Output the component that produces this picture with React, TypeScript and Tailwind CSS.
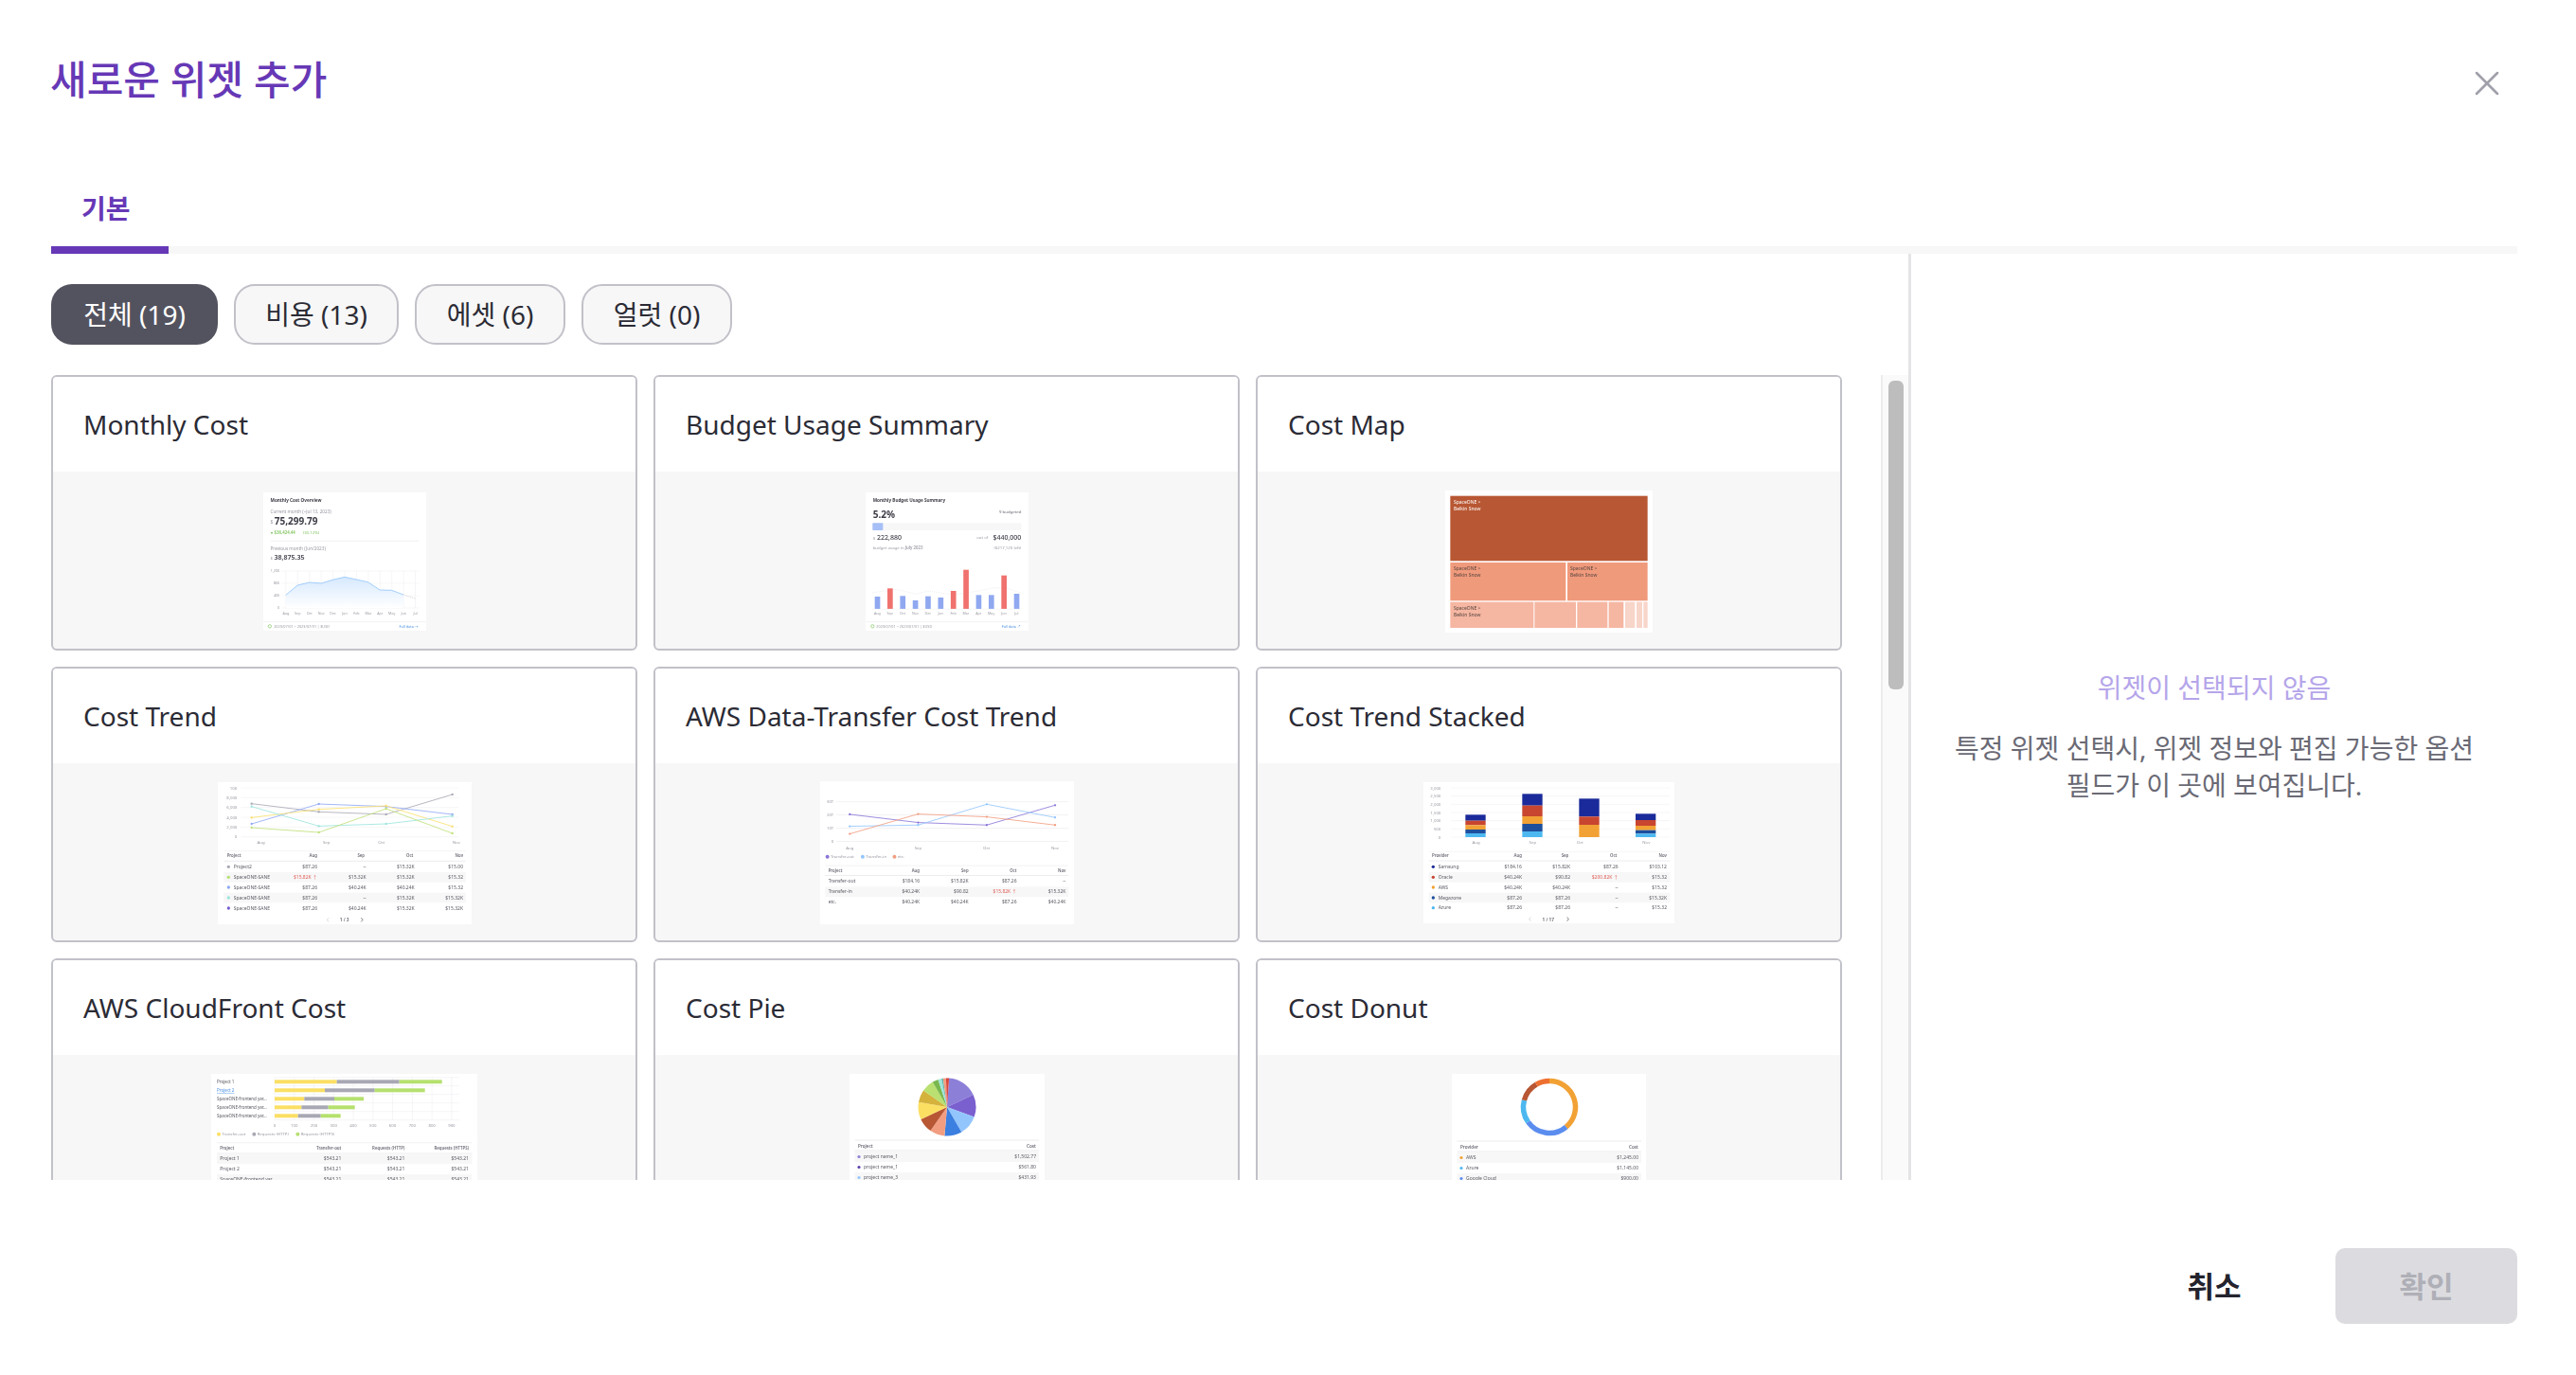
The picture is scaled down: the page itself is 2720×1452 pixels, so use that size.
import { X } from "lucide-react";

const INK = "#3c3c46";
const MUTED = "#9a9aa4";
const LINE = "#ececf0";
const months12 = ["Aug", "Sep", "Oct", "Nov", "Dec", "Jan", "Feb", "Mar", "Apr", "May", "Jun", "Jul"];

function MonthlyCostThumb() {
  const pts = [[126, 353], [163, 322], [201, 313], [238, 316], [274, 305], [312, 296], [350, 304], [386, 312], [424, 337], [461, 338], [498, 352]];
  const line = pts.map((p) => p.join(",")).join(" ");
  return (
    <svg viewBox="55 28 515 438" width={172} height={146} className="shrink-0 bg-white blur-[0.4px]">
      <defs>
        <linearGradient id="costFill" x1="0" y1="0" x2="0" y2="1">
          <stop offset="0" stopColor="#d6e9fd" />
          <stop offset="1" stopColor="#ffffff" />
        </linearGradient>
      </defs>
      <text x={77} y={57} fontSize={14} fontWeight={700} fill={INK}>Monthly Cost Overview</text>
      <text x={77} y={93} fontSize={14} fill={MUTED}>Current month (~Jul 13, 2023)</text>
      <text x={77} y={127} fontSize={15} fill={MUTED}>$</text>
      <text x={90} y={131} fontSize={30} fontWeight={700} fill={INK}>75,299.79</text>
      <text x={80} y={161} fontSize={13} fontWeight={600} fill="#7cc25a">▾ $36,424.44</text>
      <text x={180} y={161} fontSize={13} fill="#7cc25a">(33.12%)</text>
      <line x1={77} y1={182} x2={548} y2={182} stroke={LINE} strokeWidth={2} />
      <text x={77} y={211} fontSize={14} fill={MUTED}>Previous month (Jun/2023)</text>
      <text x={77} y={240} fontSize={13} fill={MUTED}>$</text>
      <text x={89} y={242} fontSize={21} fontWeight={600} fill={INK}>38,875.35</text>
      {[277, 316, 355, 394].map((y, i) => (
        <g key={y}>
          <line x1={112} y1={y} x2={548} y2={y} stroke={LINE} strokeWidth={1.5} />
          <text x={106} y={y + 4} fontSize={11} textAnchor="end" fill={MUTED}>{["1,200", "800", "400", "0"][i]}</text>
        </g>
      ))}
      {months12.map((m, i) => (
        <g key={m}>
          <line x1={126 + i * 37.3} y1={277} x2={126 + i * 37.3} y2={394} stroke={LINE} strokeWidth={1.5} />
          <text x={126 + i * 37.3} y={414} fontSize={11} textAnchor="middle" fill={MUTED}>{m}</text>
        </g>
      ))}
      <polygon points={`126,394 ${line} 498,394`} fill="url(#costFill)" />
      <polyline points={line} fill="none" stroke="#93c5fd" strokeWidth={2.5} />
      <polyline points="498,352 536,364" fill="none" stroke="#c4c4cc" strokeWidth={2} strokeDasharray="4 3" />
      <line x1={55} y1={438} x2={570} y2={438} stroke={LINE} strokeWidth={2} />
      <circle cx={75} cy={452} r={5} fill="none" stroke="#7cc25a" strokeWidth={2} />
      <text x={88} y={456} fontSize={11.5} fill={MUTED}>2023/07/01 ~ 2023/07/31 | $USD</text>
      <text x={485} y={456} fontSize={11.5} fill="#4a90e2">Full data →</text>
    </svg>
  );
}

function BudgetThumb() {
  const tops = [358, 332, 356, 370, 357, 361, 340, 273, 353, 353, 291, 349];
  const red = [1, 6, 7, 10];
  return (
    <svg viewBox="43 28 514 438" width={172} height={146} className="shrink-0 bg-white blur-[0.4px]">
      <text x={65} y={57} fontSize={14} fontWeight={700} fill={INK}>Monthly Budget Usage Summary</text>
      <text x={65} y={110} fontSize={30} fontWeight={700} fill={INK}>5.2%</text>
      <text x={535} y={94} fontSize={13} textAnchor="end" fill="#6a6a75">9 budgeted</text>
      <rect x={64} y={125} width={471} height={23} fill="#f7f7f7" />
      <rect x={64} y={125} width={33} height={23} rx={2} fill="#a6bff6" />
      <text x={65} y={178} fontSize={13} fill={MUTED}>$</text>
      <text x={78} y={179} fontSize={21} fontWeight={500} fill={INK}>222,880</text>
      <text x={430} y={176} fontSize={13} textAnchor="end" fill={MUTED}>out of</text>
      <text x={535} y={179} fontSize={21} fontWeight={500} textAnchor="end" fill={INK}>$440,000</text>
      <text x={65} y={207} fontSize={13} fill={MUTED}>budget usage in <tspan fontWeight={600}>July 2023</tspan></text>
      <text x={535} y={207} fontSize={13} textAnchor="end" fill={MUTED}>($217,120 left)</text>
      <polyline points="64,345 140,335 200,350 240,340 320,352 400,340 450,330 490,332 535,347" fill="none" stroke="#dcdce0" strokeWidth={1.5} strokeDasharray="3 3" />
      {tops.map((t, i) => (
        <rect key={i} x={71 + i * 40.1} y={t} width={17} height={397 - t} fill={red.includes(i) ? "#f0726e" : "#8fa8f0"} />
      ))}
      <line x1={64} y1={398} x2={535} y2={398} stroke={LINE} strokeWidth={1.5} />
      {months12.map((m, i) => (
        <text key={m} x={79 + i * 40.1} y={414} fontSize={11} textAnchor="middle" fill={MUTED}>{m}</text>
      ))}
      <line x1={43} y1={438} x2={557} y2={438} stroke={LINE} strokeWidth={2} />
      <circle cx={64} cy={452} r={5} fill="none" stroke="#7cc25a" strokeWidth={2} />
      <text x={76} y={456} fontSize={11.5} fill={MUTED}>2023/07/01 ~ 2023/07/31 | $USD</text>
      <text x={473} y={456} fontSize={11.5} fill="#4a90e2">Full data ↗</text>
    </svg>
  );
}

function CostMapThumb() {
  const mid = "#f09a7c";
  const light = "#f5b6a2";
  const pale = "#f8d5c9";
  const tiles = [
    [66, 248, 366, 121, mid], [437, 248, 254, 121, mid],
    [66, 373, 264, 82, light], [333, 373, 131, 82, light], [468, 373, 96, 82, light], [568, 373, 47, 82, light],
    [620, 373, 31, 82, pale], [656, 373, 18, 82, pale], [678, 373, 13, 82, pale],
  ] as const;
  const labels = [[77, 62, "#ffffff"], [77, 273, "#55443f"], [446, 273, "#55443f"], [77, 398, "#55443f"]] as const;
  return (
    <svg viewBox="50 20 657 450" width={219} height={150} className="shrink-0 bg-white blur-[0.3px]">
      <rect x={66} y={37} width={625} height={206} fill="#b85733" />
      {tiles.map(([x, y, w, h, c]) => (
        <rect key={`${x}-${y}`} x={x} y={y} width={w} height={h} fill={c} />
      ))}
      {labels.map(([x, y, c]) => (
        <text key={`${x}-${y}`} x={x} y={y} fontSize={15} fill={c}>
          <tspan x={x}>SpaceONE &gt;</tspan>
          <tspan x={x} dy={21}>Belkin Snow</tspan>
        </text>
      ))}
    </svg>
  );
}

type Row = { name: string; dot?: string; cells: string[]; alert?: number };

function TableRows({ rows, ys, nameX, cols, left, right, size = 15 }: { rows: Row[]; ys: number[]; nameX: number; cols: number[]; left: number; right: number; size?: number }) {
  return (
    <>
      {rows.map((r, i) => (
        <g key={i}>
          {i % 2 === 1 && <rect x={left} y={ys[i] - 16} width={right - left} height={32} fill="#f7f7f7" />}
          {r.dot && <circle cx={nameX - 16} cy={ys[i]} r={5} fill={r.dot} />}
          <text x={nameX} y={ys[i] + 5} fontSize={size} fill="#5a5a64">{r.name}</text>
          {r.cells.map((c, j) => (
            <text key={j} x={cols[j]} y={ys[i] + 5} fontSize={size} textAnchor="end" fill={r.alert === j ? "#e0605a" : "#5a5a64"}>{c}</text>
          ))}
        </g>
      ))}
    </>
  );
}

function CostTrendThumb() {
  const series = [
    ["#a8a8b4", "134,96 347,122 560,130 770,67"],
    ["#8fa8f5", "134,160 347,97 560,105 770,130"],
    ["#fbe06e", "134,140 347,114 560,103 770,168"],
    ["#9ce5dc", "134,105 347,167 560,160 770,135"],
    ["#bfe07a", "134,172 347,187 560,112 770,190"],
  ];
  const rows: Row[] = [
    { name: "Project2", dot: "#a8a8b4", cells: ["$87.26", "--", "$15.32K", "$15.00"] },
    { name: "SpaceONE-SANE", dot: "#b5e06e", cells: ["$15.82K ↑", "$15.32K", "$15.32K", "$15.32"], alert: 0 },
    { name: "SpaceONE-SANE", dot: "#8fa8f5", cells: ["$87.26", "$40.24K", "$40.24K", "$15.32"] },
    { name: "SpaceONE-SANE", dot: "#9ce5dc", cells: ["$87.26", "--", "$15.32K", "$15.32K"] },
    { name: "SpaceONE-SANE", dot: "#7a5fcf", cells: ["$87.26", "$40.24K", "$15.32K", "$15.32K"] },
  ];
  return (
    <svg viewBox="28 28 802 450" width={268} height={150} className="shrink-0 bg-white blur-[0.4px]">
      {[46, 77, 108, 139, 170, 201].map((y, i) => (
        <g key={y}>
          <line x1={100} y1={y} x2={790} y2={y} stroke={LINE} strokeWidth={1.5} />
          <text x={88} y={y + 5} fontSize={13} textAnchor="end" fill={MUTED}>{["10K", "8,000", "6,000", "4,000", "2,000", "0"][i]}</text>
        </g>
      ))}
      {series.map(([c, p]) => (
        <g key={c}>
          <polyline points={p} fill="none" stroke={c} strokeWidth={2.5} />
          {p.split(" ").map((q) => (
            <circle key={q} cx={Number(q.split(",")[0])} cy={Number(q.split(",")[1])} r={3.5} fill={c} />
          ))}
        </g>
      ))}
      {[["Aug", 164], ["Sep", 371], ["Oct", 545], ["Nov", 782]].map(([m, x]) => (
        <text key={m} x={x} y={222} fontSize={13} textAnchor="middle" fill={MUTED}>{m}</text>
      ))}
      <line x1={46} y1={246} x2={812} y2={246} stroke={LINE} strokeWidth={1.5} />
      <text x={56} y={266} fontSize={13} fontWeight={600} fill="#6a6a75">Project</text>
      {["Aug", "Sep", "Oct", "Nov"].map((m, i) => (
        <text key={m} x={[342, 492, 646, 804][i]} y={266} fontSize={13} fontWeight={600} textAnchor="end" fill="#6a6a75">{m}</text>
      ))}
      <line x1={46} y1={278} x2={812} y2={278} stroke={LINE} strokeWidth={3} />
      <TableRows rows={rows} ys={[296, 329, 361, 394, 427]} nameX={77} cols={[342, 497, 650, 804]} left={46} right={812} />
      <path d="M378 458l-5 6 5 6" fill="none" stroke="#c4c4cc" strokeWidth={2} />
      <text x={428} y={470} fontSize={14} fontWeight={600} textAnchor="middle" fill="#5a5a64">1 / 3</text>
      <path d="M481 458l5 6-5 6" fill="none" stroke="#3c3c46" strokeWidth={2} />
    </svg>
  );
}

function TransferTrendThumb() {
  const series = [
    ["#8a75d8", "111,132 328,158 546,166 763,103"],
    ["#93c5fd", "111,170 328,166 546,100 763,142"],
    ["#f29d80", "111,194 328,131 546,140 763,166"],
  ];
  const rows: Row[] = [
    { name: "Transfer-out", cells: ["$184.16", "$15.82K", "$87.26", "--"] },
    { name: "Transfer-in", cells: ["$40.24K", "$90.82", "$15.82K ↑", "$15.32K"], alert: 2 },
    { name: "etc.", cells: ["$40.24K", "$40.24K", "$87.26", "$40.24K"] },
  ];
  return (
    <svg viewBox="17 28 806 452" width={268} height={151} className="shrink-0 bg-white blur-[0.4px]">
      {[92, 134, 176, 218].map((y, i) => (
        <g key={y}>
          <line x1={68} y1={y} x2={806} y2={y} stroke={LINE} strokeWidth={2} />
          <text x={60} y={y + 5} fontSize={13} textAnchor="end" fill={MUTED}>{["30T", "20T", "10T", "0"][i]}</text>
        </g>
      ))}
      {series.map(([c, p]) => (
        <g key={c}>
          <polyline points={p} fill="none" stroke={c} strokeWidth={2.5} />
          {p.split(" ").map((q) => (
            <circle key={q} cx={Number(q.split(",")[0])} cy={Number(q.split(",")[1])} r={3.5} fill={c} />
          ))}
        </g>
      ))}
      {[["Aug", 111], ["Sep", 328], ["Oct", 545], ["Nov", 763]].map(([m, x]) => (
        <text key={m} x={x} y={244} fontSize={13} textAnchor="middle" fill={MUTED}>{m}</text>
      ))}
      {[[40, "#8a75d8", "Transfer-out"], [152, "#93c5fd", "Transfer-in"], [253, "#f29d80", "etc."]].map(([x, c, t]) => (
        <g key={t as string}>
          <circle cx={x as number} cy={267} r={6} fill={c as string} />
          <text x={(x as number) + 10} y={272} fontSize={13} fill={MUTED}>{t}</text>
        </g>
      ))}
      <line x1={33} y1={295} x2={806} y2={295} stroke={LINE} strokeWidth={2} />
      <text x={43} y={317} fontSize={13} fontWeight={600} fill="#6a6a75">Project</text>
      {["Aug", "Sep", "Oct", "Nov"].map((m, i) => (
        <text key={m} x={[333, 488, 641, 797][i]} y={317} fontSize={13} fontWeight={600} textAnchor="end" fill="#6a6a75">{m}</text>
      ))}
      <line x1={33} y1={326} x2={806} y2={326} stroke={LINE} strokeWidth={3} />
      <TableRows rows={rows} ys={[345, 378, 411]} nameX={43} cols={[333, 488, 641, 797]} left={33} right={806} />
    </svg>
  );
}

function StackedThumb() {
  const navy = "#1a2a9a";
  const red = "#c8452f";
  const orange = "#f2a134";
  const blue = "#1d4f9c";
  const sky = "#4db8f0";
  const stacks: [number, [number, number, string][]][] = [
    [168, [[131, 150, navy], [150, 164, red], [164, 178, orange], [178, 190, blue], [190, 202, sky]]],
    [348, [[65, 102, navy], [102, 136, red], [136, 160, orange], [160, 184, blue], [184, 202, sky]]],
    [528, [[80, 137, navy], [137, 163, red], [163, 202, orange]]],
    [707, [[128, 148, navy], [148, 166, red], [166, 180, orange], [180, 191, blue], [191, 202, sky]]],
  ];
  const rows: Row[] = [
    { name: "Samsung", dot: navy, cells: ["$184.16", "$15.82K", "$87.26", "$103.12"] },
    { name: "Oracle", dot: red, cells: ["$40.24K", "$90.82", "$200.82K ↑", "$15.32"], alert: 2 },
    { name: "AWS", dot: orange, cells: ["$40.24K", "$40.24K", "--", "$15.32"] },
    { name: "Megazone", dot: blue, cells: ["$87.26", "$87.26", "--", "$15.32K"] },
    { name: "Azure", dot: sky, cells: ["$87.26", "$87.26", "--", "$15.32"] },
  ];
  return (
    <svg viewBox="35 28 795 447" width={265} height={149} className="shrink-0 bg-white blur-[0.4px]">
      {[46, 72, 98, 124, 150, 176, 202].map((y, i) => (
        <g key={y}>
          <line x1={122} y1={y} x2={816} y2={y} stroke={LINE} strokeWidth={1.5} />
          <text x={90} y={y + 5} fontSize={13} textAnchor="end" fill={MUTED}>{["3,000", "2,500", "2,000", "1,500", "1,000", "500", "0"][i]}</text>
        </g>
      ))}
      {stacks.map(([x, parts]) =>
        parts.map(([a, b, c]) => <rect key={`${x}-${a}`} x={x} y={a} width={64} height={b - a} fill={c} />)
      )}
      {[["Aug", 202], ["Sep", 381], ["Oct", 531], ["Nov", 741]].map(([m, x]) => (
        <text key={m} x={x} y={222} fontSize={13} textAnchor="middle" fill={MUTED}>{m}</text>
      ))}
      <line x1={52} y1={248} x2={816} y2={248} stroke={LINE} strokeWidth={1.5} />
      <text x={62} y={266} fontSize={13} fontWeight={600} fill="#6a6a75">Provider</text>
      {["Aug", "Sep", "Oct", "Nov"].map((m, i) => (
        <text key={m} x={[347, 495, 648, 806][i]} y={266} fontSize={13} fontWeight={600} textAnchor="end" fill="#6a6a75">{m}</text>
      ))}
      <line x1={52} y1={277} x2={816} y2={277} stroke={LINE} strokeWidth={3} />
      <TableRows rows={rows} ys={[296, 329, 361, 394, 426]} nameX={82} cols={[347, 500, 652, 806]} left={52} right={816} />
      <path d="M375 456l-5 6 5 6" fill="none" stroke="#c4c4cc" strokeWidth={2} />
      <text x={430} y={469} fontSize={14} fontWeight={600} textAnchor="middle" fill="#5a5a64">1 / 17</text>
      <path d="M490 456l5 6-5 6" fill="none" stroke="#3c3c46" strokeWidth={2} />
    </svg>
  );
}

function CloudFrontThumb() {
  const bars = [
    [63, 438, 636, 771], [90, 400, 558, 717], [117, 335, 430, 523], [144, 326, 411, 495], [171, 315, 387, 450],
  ];
  const names = ["Project 1", "Project 2", "SpaceONE-frontend yar...", "SpaceONE-frontend yar...", "SpaceONE-frontend yar..."];
  const rows: Row[] = [
    { name: "Project 1", cells: ["$543.21", "$543.21", "$543.21"] },
    { name: "Project 2", cells: ["$543.21", "$543.21", "$543.21"] },
    { name: "SpaceONE-frontend yar...", cells: ["$543.21", "$543.21", "$543.21"] },
  ];
  return (
    <svg viewBox="40 38 843 450" width={281} height={150} className="shrink-0 bg-white blur-[0.4px]">
      {[49, 76, 103, 130, 157, 184].map((y) => (
        <line key={y} x1={241} y1={y} x2={826} y2={y} stroke={LINE} strokeWidth={1.5} />
      ))}
      {[0, 100, 200, 300, 400, 500, 600, 700, 800, 900].map((v, i) => (
        <g key={v}>
          <line x1={241 + i * 62.3} y1={49} x2={241 + i * 62.3} y2={184} stroke={LINE} strokeWidth={1.5} />
          <text x={241 + i * 62.3} y={206} fontSize={13} textAnchor="middle" fill={MUTED}>{v}</text>
        </g>
      ))}
      {bars.map(([y, a, b, c], i) => (
        <g key={y}>
          <rect x={241} y={y - 6} width={a - 241} height={12} fill="#fbdf63" />
          <rect x={a} y={y - 6} width={b - a} height={12} fill="#a8a8b4" />
          <rect x={b} y={y - 6} width={c - b} height={12} fill="#b5e06e" />
          <text x={58} y={y + 5} fontSize={13.5} fill={i === 1 ? "#4a90e2" : "#5a5a64"} textDecoration={i === 1 ? "underline" : "none"}>{names[i]}</text>
        </g>
      ))}
      {[[64, "#fbdf63", "Transfer-out"], [176, "#a8a8b4", "Requests (HTTP)"], [314, "#b5e06e", "Requests (HTTPS)"]].map(([x, c, t]) => (
        <g key={t as string}>
          <circle cx={x as number} cy={229} r={6} fill={c as string} />
          <text x={(x as number) + 10} y={234} fontSize={13} fill={MUTED}>{t}</text>
        </g>
      ))}
      <line x1={58} y1={256} x2={866} y2={256} stroke={LINE} strokeWidth={2} />
      <text x={68} y={279} fontSize={13} fontWeight={600} fill="#6a6a75">Project</text>
      {["Transfer-out", "Requests (HTTP)", "Requests (HTTPS)"].map((m, i) => (
        <text key={m} x={[452, 653, 856][i]} y={279} fontSize={13} fontWeight={600} textAnchor="end" fill="#6a6a75">{m}</text>
      ))}
      <line x1={58} y1={290} x2={866} y2={290} stroke={LINE} strokeWidth={3} />
      <rect x={58} y={291} width={808} height={32} fill="#f7f7f7" />
      <rect x={58} y={356} width={808} height={32} fill="#f7f7f7" />
      <TableRows rows={rows} ys={[307, 340, 372]} nameX={68} cols={[452, 653, 856]} left={58} right={58} />
    </svg>
  );
}

function polar(cx: number, cy: number, r: number, deg: number) {
  const a = ((deg - 90) * Math.PI) / 180;
  return `${cx + r * Math.cos(a)} ${cy + r * Math.sin(a)}`;
}

function arc(cx: number, cy: number, r: number, a: number, b: number) {
  return `M${polar(cx, cy, r, a)}A${r} ${r} 0 ${b - a > 180 ? 1 : 0} 1 ${polar(cx, cy, r, b)}`;
}

function SmallTable({ head, rows, top }: { head: string; rows: [string, string, string][]; top: number }) {
  return (
    <>
      <line x1={5.5} y1={top} x2={200} y2={top} stroke={LINE} />
      <text x={9} y={top + 8} fontSize={4.6} fontWeight={600} fill="#6a6a75">{head}</text>
      <text x={197} y={top + 8} fontSize={4.6} fontWeight={600} textAnchor="end" fill="#6a6a75">Cost</text>
      <line x1={5.5} y1={top + 11} x2={200} y2={top + 11} stroke={LINE} strokeWidth={1.2} />
      <rect x={5.5} y={top + 12} width={194.5} height={11} fill="#f7f7f7" />
      <rect x={5.5} y={top + 34} width={194.5} height={11} fill="#f7f7f7" />
      {rows.map(([c, n, v], i) => (
        <g key={i}>
          <circle cx={10} cy={top + 17.5 + i * 11} r={1.6} fill={c} />
          <text x={15} y={top + 19.3 + i * 11} fontSize={5} fill="#5a5a64">{n}</text>
          <text x={197} y={top + 19.3 + i * 11} fontSize={5} textAnchor="end" fill="#5a5a64">{v}</text>
        </g>
      ))}
    </>
  );
}

function PieThumb() {
  const slices: [number, string][] = [
    [65, "#8c7fd8"], [110, "#7a5fcf"], [150, "#93c5fd"], [185, "#3b7fe0"], [215, "#f29d80"], [245, "#b85733"],
    [280, "#fbdf63"], [305, "#d4b23c"], [330, "#b9e070"], [342, "#7ab84f"], [349, "#9ce5dc"], [352, "#5fb3a8"], [358, "#f29d80"], [364, "#d9453d"],
  ];
  return (
    <svg viewBox="0 0 206 150" width={206} height={150} className="shrink-0 bg-white blur-[0.3px]">
      {slices.map(([end, c], i) => {
        const start = i === 0 ? 4 : slices[i - 1][0];
        return <path key={i} d={`M103 35L${polar(103, 35, 30.5, start)}A30.5 30.5 0 0 1 ${polar(103, 35, 30.5, end)}Z`} fill={c} />;
      })}
      <SmallTable head="Project" top={70} rows={[["#8c7fd8", "project name_1", "$1,502.77"], ["#5b3fb0", "project name_1", "$561.80"], ["#93c5fd", "project name_3", "$431.93"]]} />
    </svg>
  );
}

function DonutThumb() {
  const parts: [number, number, string][] = [
    [0, 140, "#f2a134"], [140, 235, "#5b8def"], [235, 285, "#4db8f0"], [285, 330, "#b85733"], [330, 360, "#ee7030"],
  ];
  return (
    <svg viewBox="0 0 205 150" width={205} height={150} className="shrink-0 bg-white blur-[0.3px]">
      {parts.map(([a, b, c]) => (
        <path key={a} d={arc(103, 35, 27.5, a, b)} fill="none" stroke={c} strokeWidth={5.5} />
      ))}
      <SmallTable head="Provider" top={71} rows={[["#f2a134", "AWS", "$1,245.00"], ["#4db8f0", "Azure", "$1,145.00"], ["#5b8def", "Google Cloud", "$900.00"]]} />
    </svg>
  );
}

const widgets = [
  { title: "Monthly Cost", thumb: <MonthlyCostThumb /> },
  { title: "Budget Usage Summary", thumb: <BudgetThumb /> },
  { title: "Cost Map", thumb: <CostMapThumb /> },
  { title: "Cost Trend", thumb: <CostTrendThumb /> },
  { title: "AWS Data-Transfer Cost Trend", thumb: <TransferTrendThumb /> },
  { title: "Cost Trend Stacked", thumb: <StackedThumb /> },
  { title: "AWS CloudFront Cost", thumb: <CloudFrontThumb /> },
  { title: "Cost Pie", thumb: <PieThumb /> },
  { title: "Cost Donut", thumb: <DonutThumb /> },
];

const chips = [
  { label: "전체 (19)", width: "w-[176px]", active: true },
  { label: "비용 (13)", width: "w-[174px]", active: false },
  { label: "에셋 (6)", width: "w-[159px]", active: false },
  { label: "얼럿 (0)", width: "w-[159px]", active: false },
];

export default function App() {
  return (
    <div className="flex h-[1452px] w-[2720px] flex-col overflow-hidden bg-white font-['Noto_Sans','Noto_Sans_CJK_KR',sans-serif]">
      {/* Header */}
      <div className="flex h-[180px] shrink-0 items-start justify-between pl-[53px] pr-[72px]">
        <h1 className="pt-[56px] text-[42px] leading-[56px] font-medium text-[#6638b6]">새로운 위젯 추가</h1>
        <X size={44} strokeWidth={1.4} className="mt-[66px] text-[#a0a0aa]" />
      </div>

      {/* Tabs */}
      <div className="mx-[54px] mr-[62px] flex h-[88px] shrink-0 border-b-[8px] border-[#f7f7f7]">
        <div className="-mb-[8px] h-[88px] w-[124px] shrink-0 border-b-[8px] border-[#6638b6] pl-[32px] pt-[19px] text-[28px] leading-[42px] font-bold text-[#6638b6]">
          기본
        </div>
      </div>

      {/* Body */}
      <div className="flex h-[978px] shrink-0 pl-[54px] pr-[62px]">
        <div className="flex w-[1964px] shrink-0 flex-col border-r-[3px] border-[#e4e4e6] pt-[32px]">
          <div className="flex h-[64px] shrink-0 gap-[17px]">
            {chips.map((c) => (
              <div
                key={c.label}
                className={
                  c.active
                    ? "flex items-center justify-center rounded-[22px] bg-[#53535f] text-[28px] text-white " + c.width
                    : "flex items-center justify-center rounded-[22px] border-2 border-[#c1c1c9] bg-[#f7f7f7] text-[28px] text-[#2b2b35] " + c.width
                }
              >
                {c.label}
              </div>
            ))}
          </div>
          <div className="mt-[32px] flex min-h-0 flex-1">
            <div className="grid w-[1891px] shrink-0 grid-cols-3 content-start gap-[17px] overflow-hidden">
              {widgets.map((w) => (
                <div key={w.title} className="h-[291px] overflow-hidden rounded-[6px] border-2 border-[#c1c1c9] bg-[#f7f7f7]">
                  <div className="flex h-[100px] items-center bg-white pl-[32px] text-[28px] text-[#2b2b35]">{w.title}</div>
                  <div className="flex h-[187px] items-center justify-center overflow-hidden pt-[2px]">{w.thumb}</div>
                </div>
              ))}
            </div>
            <div className="ml-[41px] w-[29px] shrink-0 border-l-2 border-[#ececec] bg-[#fafafa] pl-[6px] pt-[6px]">
              <div className="h-[326px] w-[16px] rounded-[6px] bg-[#bdbdbd]" />
            </div>
          </div>
        </div>
        <div className="flex flex-1 flex-col items-center pt-[438px] text-center">
          <div className="text-[28px] leading-[40px] text-[#b5a5ea]">위젯이 선택되지 않음</div>
          <p className="mt-[25px] text-[28px] leading-[39px] text-[#6a6a75]">
            특정 위젯 선택시, 위젯 정보와 편집 가능한 옵션
            <br />
            필드가 이 곳에 보여집니다.
          </p>
        </div>
      </div>

      {/* Footer */}
      <div className="flex flex-1 justify-end gap-[32px] pr-[62px] pt-[72px]">
        <div className="flex h-[80px] w-[192px] items-center justify-center text-[31px] font-bold text-[#23232d]">취소</div>
        <div className="flex h-[80px] w-[192px] items-center justify-center rounded-[10px] bg-[#dcdce0] text-[31px] font-bold text-[#afafb7]">확인</div>
      </div>
    </div>
  );
}
